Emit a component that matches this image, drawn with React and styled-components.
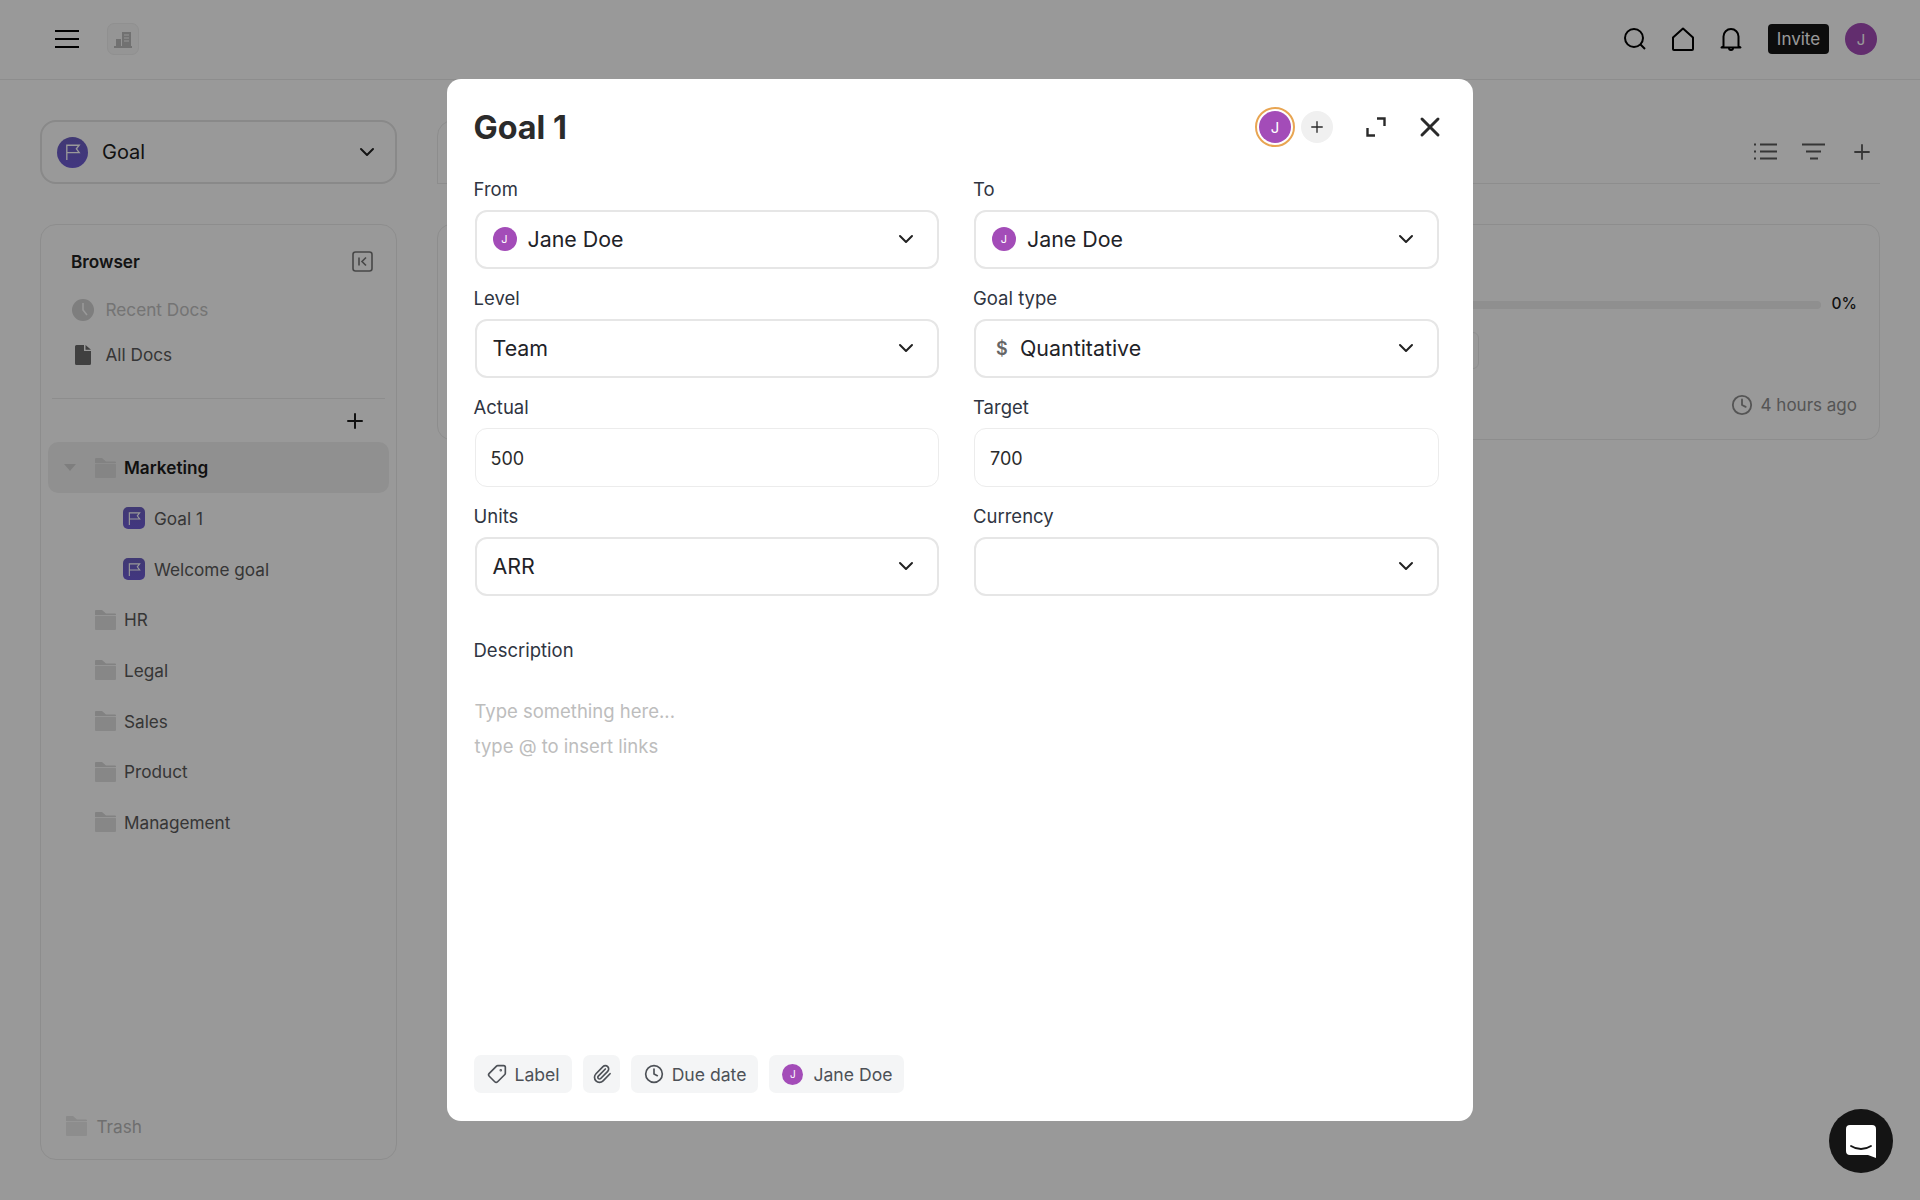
import styled, { createGlobalStyle } from "styled-components";
import { ChevronDown, Plus, X, Tag, Paperclip, Clock } from "lucide-react";

const GlobalStyle = createGlobalStyle`
  html, body { margin: 0; padding: 0; background: #fff; }
  body { font-family: Inter, "Liberation Sans", sans-serif; color: #1f2328; overflow: hidden; }
  * { box-sizing: border-box; }
`;

const Page = styled.div`
  width: 1920px;
  height: 1200px;
  display: flex;
  flex-direction: column;
`;

/* top bar */
const TopBar = styled.header`
  height: 80px;
  flex: none;
  display: flex;
  align-items: center;
  padding: 0 43px 1px 55px;
  border-bottom: 1px solid #ececec;
`;
const LogoBox = styled.div`
  width: 32px;
  height: 32px;
  margin-left: 28px;
  border-radius: 7px;
  background: #f8f8f8;
  border: 1px solid #f0f0f0;
  display: flex;
  align-items: center;
  justify-content: center;
`;
const TopActions = styled.div`
  margin-left: auto;
  display: flex;
  align-items: center;
`;
const TopIcon = styled.span`
  display: flex;
  width: 24px;
  height: 24px;
  margin-right: 24px;
`;
const InviteButton = styled.div`
  width: 61px;
  height: 30px;
  margin-left: 1.5px;
  border-radius: 4px;
  background: #151515;
  color: #fff;
  font-size: 17px;
  display: flex;
  align-items: center;
  justify-content: center;
`;
const Avatar = styled.span`
  flex: none;
  width: ${(p) => p.$size}px;
  height: ${(p) => p.$size}px;
  font-size: ${(p) => Math.round(p.$size * 0.46)}px;
  border-radius: 50%;
  background: #a34cb8;
  color: #fff;
  display: flex;
  align-items: center;
  justify-content: center;
  margin-left: ${(p) => p.$left || 0}px;
  margin-right: ${(p) => p.$right || 0}px;
`;

/* page body */
const Body = styled.div`
  flex: 1;
  display: flex;
  padding: 40px 40px 40px 40px;
  gap: 40px;
  min-height: 0;
`;
const Sidebar = styled.aside`
  width: 357px;
  flex: none;
  display: flex;
  flex-direction: column;
  gap: 40px;
`;
const ModuleSelect = styled.div`
  height: 64px;
  flex: none;
  display: flex;
  align-items: center;
  padding: 0 16px 0 15px;
  border: 2px solid #e4e4e4;
  border-radius: 16px;
  font-size: 20px;
  color: #1d1d1d;
`;
const FlagCircle = styled.span`
  width: 31px;
  height: 31px;
  border-radius: 50%;
  margin-right: 14px;
  background: linear-gradient(#6c5fc0, #6e5cd6);
  display: flex;
  align-items: center;
  justify-content: center;
`;
const Push = styled.span`
  margin-left: auto;
  display: flex;
`;
const Panel = styled.div`
  flex: 1;
  display: flex;
  flex-direction: column;
  border: 1px solid #ececec;
  border-radius: 16px;
  padding: 10px 7px 0 7px;
`;
const PanelHead = styled.div`
  height: 52px;
  flex: none;
  display: flex;
  align-items: center;
  justify-content: space-between;
  padding: 0 16px 0 23px;
  font-size: 17.2px;
  font-weight: 600;
  color: #222;
`;
const DocRow = styled.div`
  height: 45px;
  flex: none;
  display: flex;
  align-items: center;
  gap: 11.5px;
  padding-left: 24px;
  font-size: 17.2px;
  color: ${(p) => (p.$muted ? "#c2c2c2" : "#5a5a5a")};
`;
const DocIcon = styled.span`
  width: 22px;
  display: flex;
  justify-content: center;
`;
const Divider = styled.div`
  height: 1px;
  flex: none;
  margin: 21px 4px 0 4px;
  background: #ececec;
`;
const AddRow = styled.div`
  height: 43.3px;
  flex: none;
  display: flex;
  align-items: center;
  justify-content: flex-end;
  padding-right: 22px;
  color: #1d1d1d;
`;
const TreeRow = styled.div`
  height: 50.7px;
  flex: none;
  display: flex;
  align-items: center;
  padding-left: ${(p) => p.$indent}px;
  border-radius: 10px;
  font-size: 17.2px;
  font-weight: ${(p) => (p.$active ? 600 : 400)};
  color: ${(p) => (p.$active ? "#1c1c1c" : "#5a5a5a")};
  background: ${(p) => (p.$active ? "#f1f1f1" : "transparent")};
`;
const Caret = styled.span`
  width: 0;
  height: 0;
  margin-right: 19px;
  border-left: 6px solid transparent;
  border-right: 6px solid transparent;
  border-top: 7px solid #d2d2d2;
`;
const FolderSlot = styled.span`
  display: flex;
  margin-right: 8px;
`;
const GoalBadge = styled.span`
  width: 22px;
  height: 22px;
  margin-right: 9px;
  border-radius: 5px;
  background: linear-gradient(#6c5fc0, #6e5cd6);
  display: flex;
  align-items: center;
  justify-content: center;
`;
const TrashRow = styled.div`
  margin-top: auto;
  margin-bottom: 20px;
  height: 26px;
  display: flex;
  align-items: center;
  padding-left: 18px;
  gap: 9.5px;
  font-size: 17.2px;
  color: #b9b9b9;
`;

/* main column behind the dialog */
const Main = styled.main`
  flex: 1;
  min-width: 0;
  display: flex;
  flex-direction: column;
  gap: 40px;
`;
const MainBar = styled.div`
  height: 64px;
  flex: none;
  display: flex;
  align-items: center;
  justify-content: flex-end;
  gap: 25px;
  padding-right: 6px;
  border-bottom: 1px solid #ececec;
  color: #5a5a5a;
`;
const MainTabs = styled.div`
  width: 400px;
  height: 64px;
  margin-right: auto;
  border: 1px solid #ececec;
  border-radius: 16px 0 0 0;
`;
const Card = styled.section`
  height: 216px;
  flex: none;
  padding: 64px 22px 0;
  border: 1px solid #ececec;
  border-radius: 14px;
`;
const ProgressRow = styled.div`
  display: flex;
  align-items: center;
  gap: 11px;
  height: 28px;
  font-size: 15.5px;
  font-weight: 500;
  color: #1d1d1d;
`;
const ProgressTrack = styled.div`
  flex: 1;
  height: 8px;
  margin-top: 4px;
  border-radius: 4px;
  background: #eeeeee;
`;
const CardChip = styled.div`
  width: 1019px;
  height: 37px;
  margin-top: 15px;
  border: 1px solid #ececec;
  border-radius: 6px;
`;
const CardMeta = styled.div`
  margin-top: 25px;
  display: flex;
  align-items: center;
  justify-content: flex-end;
  gap: 8px;
  font-size: 17px;
  color: #8e8e8e;
`;

/* dialog */
const Overlay = styled.div`
  position: fixed;
  inset: 0;
  padding-top: 79px;
  display: flex;
  justify-content: center;
  align-items: flex-start;
  background: rgba(0, 0, 0, 0.4);
`;
const Dialog = styled.div`
  width: 1026px;
  height: 1042px;
  display: flex;
  flex-direction: column;
  padding: 0 32.5px 28px 26.5px;
  border-radius: 14px;
  background: #fff;
`;
const DialogHead = styled.div`
  height: 99px;
  flex: none;
  padding-bottom: 3px;
  display: flex;
  align-items: center;
`;
const DialogTitle = styled.h1`
  margin: 0;
  font-size: 32.3px;
  font-weight: 700;
  color: #2b2b2b;
`;
const HeadTools = styled.div`
  margin-left: auto;
  margin-right: -5.5px;
  display: flex;
  align-items: center;
  color: #2a2a2a;
`;
const RingedAvatar = styled.span`
  width: 40px;
  height: 40px;
  padding: 2px;
  border-radius: 50%;
  border: 2px solid #e8a552;
  display: flex;
  align-items: center;
  justify-content: center;
`;
const AddOwner = styled.span`
  width: 32px;
  height: 32px;
  margin: 0 33px 0 6px;
  border-radius: 50%;
  background: #f0f0f0;
  display: flex;
  align-items: center;
  justify-content: center;
`;
const CloseIcon = styled(X)`
  margin-left: 28px;
`;
const FlippedTag = styled(Tag)`
  transform: scaleX(-1);
`;
const FieldGrid = styled.div`
  display: grid;
  grid-template-columns: 466.5px 466.5px;
  column-gap: 33px;
  row-gap: 18px;
`;
const FieldLabel = styled.div`
  height: 22px;
  line-height: 22px;
  margin-bottom: 10px;
  font-size: 18.5px;
  color: #2f3542;
`;
const SelectBox = styled.div`
  height: 59px;
  margin: 0 1px;
  display: flex;
  align-items: center;
  padding: 0 19px 1px 16px;
  border: 2px solid #e6e6e6;
  border-radius: 12px;
  font-size: 21.4px;
  color: #1f2328;
`;
const InputBox = styled.div`
  height: 59px;
  margin: 0 1px;
  display: flex;
  align-items: center;
  padding: 2px 15px 0;
  border: 1px solid #ececec;
  border-radius: 12px;
  font-size: 18px;
  color: #2b2b2b;
`;
const DollarMark = styled.span`
  width: 13px;
  margin: 0 11px 0 4px;
  font-size: 18px;
  font-weight: 600;
  color: #666;
`;
const DescLabel = styled(FieldLabel)`
  margin: 42.5px 0 33px;
`;
const Placeholder = styled.div`
  height: 35px;
  line-height: 35px;
  padding-left: 1px;
  font-size: 18.5px;
  color: #bdbdbd;
`;
const ChipRow = styled.div`
  margin-top: auto;
  display: flex;
  gap: 11px;
`;
const Chip = styled.div`
  height: 38px;
  display: flex;
  align-items: center;
  gap: 8px;
  padding: 0 ${(p) => p.$right || 12}px 0 ${(p) => p.$left || 13}px;
  border-radius: 7px;
  background: #f4f5f6;
  font-size: 17.6px;
  color: #4d5157;
`;
const ChatBubble = styled.div`
  position: fixed;
  right: 27px;
  bottom: 27px;
  width: 64px;
  height: 64px;
  border-radius: 50%;
  background: #141414;
  display: flex;
  align-items: center;
  justify-content: center;
`;

const Hamburger = () => (
  <svg width="24" height="20" viewBox="0 0 24 20" fill="none" stroke="#000" strokeWidth="2">
    <path d="M0 2h24M0 10h24M0 18h24" />
  </svg>
);
const Building = () => (
  <svg width="18" height="18" viewBox="0 0 18 18" fill="#bdbdbd">
    <path d="M2 9h5v7H2zM8 2h9v14H8zM0 16h18v2H0z" />
    <path d="M10 5h5M10 8h5M10 11h5" stroke="#f8f8f8" strokeWidth="1" />
  </svg>
);
const SearchIcon = () => (
  <svg width="24" height="24" viewBox="0 0 24 24" fill="none" stroke="#000" strokeWidth="2">
    <circle cx="11" cy="11" r="9" />
    <path d="M17.500 17.500 22 22" />
  </svg>
);
const HomeIcon = () => (
  <svg width="24" height="24" viewBox="0 0 24 24" fill="none" stroke="#000" strokeWidth="2" strokeLinejoin="round">
    <path d="M12 1.500 2 10.500V22a1 1 0 0 0 1 1h18a1 1 0 0 0 1-1V10.500z" />
  </svg>
);
const BellIcon = () => (
  <svg width="24" height="24" viewBox="0 0 24 24" fill="none" stroke="#000" strokeWidth="2" strokeLinejoin="round">
    <path d="M4.500 19V9.500a7.500 7.500 0 0 1 15 0V19l2 1.500H2.500z" />
    <path d="M10 21a2 2 0 0 0 4 0" />
  </svg>
);
const Flag = ({ size }) => (
  <svg width={size} height={size} viewBox="0 0 16 16" fill="none" stroke="#fff" strokeWidth="1.2">
    <path d="M2.500 15V2h11l-2.500 3.200L13.500 8.500h-11" />
  </svg>
);
const CollapseIcon = () => (
  <svg width="21" height="21" viewBox="0 0 21 21" fill="none" stroke="#777" strokeWidth="1.6">
    <rect x="1" y="1" width="19" height="19" rx="2.5" />
    <path d="M7 6.500v8M14 6.500l-4 4 4 4" />
  </svg>
);
const ClockSolid = () => (
  <svg width="22" height="22" viewBox="0 0 22 22">
    <circle cx="11" cy="11" r="11" fill="#d2d2d2" />
    <path d="M11 4v7l4 5" stroke="#fff" strokeWidth="1.6" fill="none" />
  </svg>
);
const FileSolid = () => (
  <svg width="16" height="20" viewBox="0 0 16 20">
    <path d="M1.500 0H9v6h7v12.500a1.500 1.500 0 0 1-1.500 1.500h-13A1.500 1.500 0 0 1 0 18.500v-17A1.500 1.500 0 0 1 1.500 0z" fill="#6b6b6b" />
    <path d="M10.500 0 16 4.800h-5.500z" fill="#6b6b6b" />
  </svg>
);
const Folder = ({ color = "#d9d9d9" }) => (
  <svg width="21" height="20" viewBox="0 0 21 20">
    <path d="M1 0h6l4 3.500h9a1 1 0 0 1 1 1V5H0V1a1 1 0 0 1 1-1z" fill={color} />
    <path d="M1 5.800h19a1 1 0 0 1 1 1V19a1 1 0 0 1-1 1H1a1 1 0 0 1-1-1V6.800a1 1 0 0 1 1-1z" fill={color} opacity=".8" />
  </svg>
);
const ListIcon = () => (
  <svg width="23" height="17" viewBox="0 0 23 17" fill="none" stroke="currentColor" strokeWidth="2">
    <path d="M6 1.500h17M6 8.500h17M6 15.500h17M0 1.500h2M0 8.500h2M0 15.500h2" />
  </svg>
);
const FilterIcon = () => (
  <svg width="23" height="17" viewBox="0 0 23 17" fill="none" stroke="currentColor" strokeWidth="2">
    <path d="M0 1.500h23M4 8.500h15M8 15.500h8" />
  </svg>
);
const ExpandIcon = () => (
  <svg width="20" height="20" viewBox="0 0 20 20" fill="none" stroke="currentColor" strokeWidth="2.400">
    <path d="M11 1.500h7.500V9M1.500 11v7.500H9" />
  </svg>
);
const ChatIcon = () => (
  <svg width="30" height="33" viewBox="0 0 30 33">
    <path d="M4 0h22a4 4 0 0 1 4 4v29l-8-3H4a4 4 0 0 1-4-4V4a4 4 0 0 1 4-4z" fill="#fff" />
    <path d="M5 21c6 4 14 4 20 0" fill="none" stroke="#141414" strokeWidth="1.800" strokeLinecap="round" />
  </svg>
);

const Chevron = () => (
  <Push>
    <ChevronDown size={24} strokeWidth={2} color="#222" />
  </Push>
);

const treeItems = ["HR", "Legal", "Sales", "Product", "Management"];

const App = () => {
  return (
    <Page>
      <GlobalStyle />
      <TopBar>
        <Hamburger />
        <LogoBox>
          <Building />
        </LogoBox>
        <TopActions>
          <TopIcon><SearchIcon /></TopIcon>
          <TopIcon><HomeIcon /></TopIcon>
          <TopIcon><BellIcon /></TopIcon>
          <InviteButton>Invite</InviteButton>
          <Avatar $size={32} $left={16}>J</Avatar>
        </TopActions>
      </TopBar>
      <Body>
        <Sidebar>
          <ModuleSelect>
            <FlagCircle><Flag size={18} /></FlagCircle>
            Goal
            <Chevron />
          </ModuleSelect>
          <Panel>
            <PanelHead>
              Browser
              <CollapseIcon />
            </PanelHead>
            <DocRow $muted>
              <DocIcon><ClockSolid /></DocIcon>
              Recent Docs
            </DocRow>
            <DocRow>
              <DocIcon><FileSolid /></DocIcon>
              All Docs
            </DocRow>
            <Divider />
            <AddRow><Plus size={24} strokeWidth={2} /></AddRow>
            <TreeRow $active $indent={16}>
              <Caret />
              <FolderSlot><Folder /></FolderSlot>
              Marketing
            </TreeRow>
            <TreeRow $indent={75}>
              <GoalBadge><Flag size={15} /></GoalBadge>
              Goal 1
            </TreeRow>
            <TreeRow $indent={75}>
              <GoalBadge><Flag size={15} /></GoalBadge>
              Welcome goal
            </TreeRow>
            {treeItems.map((name) => (
              <TreeRow key={name} $indent={47}>
                <FolderSlot><Folder /></FolderSlot>
                {name}
              </TreeRow>
            ))}
            <TrashRow>
              <Folder color="#e6e6e6" />
              Trash
            </TrashRow>
          </Panel>
        </Sidebar>
        <Main>
          <MainBar>
            <MainTabs />
            <ListIcon />
            <FilterIcon />
            <Plus size={24} strokeWidth={1.8} />
          </MainBar>
          <Card>
            <ProgressRow>
              <ProgressTrack />
              0%
            </ProgressRow>
            <CardChip />
            <CardMeta>
              <Clock size={22} strokeWidth={2} />
              4 hours ago
            </CardMeta>
          </Card>
        </Main>
      </Body>
      <Overlay>
        <Dialog>
          <DialogHead>
            <DialogTitle>Goal 1</DialogTitle>
            <HeadTools>
              <RingedAvatar><Avatar $size={32}>J</Avatar></RingedAvatar>
              <AddOwner><Plus size={18} strokeWidth={1.8} /></AddOwner>
              <ExpandIcon />
              <CloseIcon size={32} strokeWidth={2.2} />
            </HeadTools>
          </DialogHead>
          <FieldGrid>
            <div>
              <FieldLabel>From</FieldLabel>
              <SelectBox><Avatar $size={24} $right={11}>J</Avatar>Jane Doe<Chevron /></SelectBox>
            </div>
            <div>
              <FieldLabel>To</FieldLabel>
              <SelectBox><Avatar $size={24} $right={11}>J</Avatar>Jane Doe<Chevron /></SelectBox>
            </div>
            <div>
              <FieldLabel>Level</FieldLabel>
              <SelectBox>Team<Chevron /></SelectBox>
            </div>
            <div>
              <FieldLabel>Goal type</FieldLabel>
              <SelectBox><DollarMark>$</DollarMark>Quantitative<Chevron /></SelectBox>
            </div>
            <div>
              <FieldLabel>Actual</FieldLabel>
              <InputBox>500</InputBox>
            </div>
            <div>
              <FieldLabel>Target</FieldLabel>
              <InputBox>700</InputBox>
            </div>
            <div>
              <FieldLabel>Units</FieldLabel>
              <SelectBox>ARR<Chevron /></SelectBox>
            </div>
            <div>
              <FieldLabel>Currency</FieldLabel>
              <SelectBox><Chevron /></SelectBox>
            </div>
          </FieldGrid>
          <DescLabel>Description</DescLabel>
          <Placeholder>Type something here...</Placeholder>
          <Placeholder>type @ to insert links</Placeholder>
          <ChipRow>
            <Chip><FlippedTag size={20} strokeWidth={2} />Label</Chip>
            <Chip $left={9} $right={8}><Paperclip size={20} strokeWidth={2} /></Chip>
            <Chip><Clock size={20} strokeWidth={2} />Due date</Chip>
            <Chip><Avatar $size={21} $right={2}>J</Avatar>Jane Doe</Chip>
          </ChipRow>
        </Dialog>
      </Overlay>
      <ChatBubble><ChatIcon /></ChatBubble>
    </Page>
  );
};

export default App;
